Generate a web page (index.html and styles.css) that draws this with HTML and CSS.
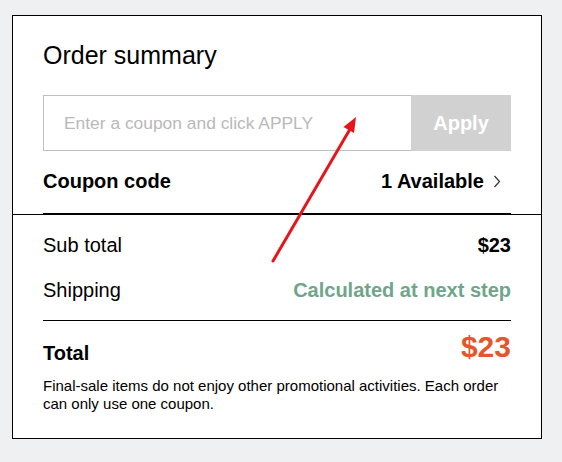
FILE: index.html
```html
<!DOCTYPE html>
<html lang="en">
<head>
<meta charset="utf-8">
<title>Order summary</title>
<link rel="stylesheet" href="styles.css">
</head>
<body>
<div class="summary">
  <h2 class="summary-title">Order summary</h2>

  <form class="coupon-form">
    <input class="coupon-input" type="text" placeholder="Enter a coupon and click APPLY">
    <button class="coupon-apply" type="button">Apply</button>
  </form>

  <div class="coupon-row">
    <span class="coupon-label">Coupon code</span>
    <span class="coupon-count">1 Available
      <svg class="chevron" width="8" height="13" viewBox="0 0 8 13"><polyline points="1.5,1 6.5,6.5 1.5,12" fill="none" stroke="#333" stroke-width="1.2"/></svg>
    </span>
  </div>

  <div class="totals">
    <div class="line">
      <span>Sub total</span>
      <span class="price">$23</span>
    </div>
    <div class="line line-last">
      <span>Shipping</span>
      <span class="shipping-note">Calculated at next step</span>
    </div>

    <div class="grand">
      <span class="grand-label">Total</span>
      <span class="grand-price">$23</span>
    </div>
    <p class="notice">Final-sale items do not enjoy other promotional activities. Each order can only use one coupon.</p>
  </div>
</div>

<!-- pointer drawn on top of the page -->
<svg class="pointer" width="562" height="462" viewBox="0 0 562 462">
  <line x1="273" y1="261" x2="349.5" y2="130" stroke="#e8141b" stroke-width="3" stroke-linecap="round"/>
  <polygon points="356,117 354,133 343.5,127" fill="#e8141b"/>
</svg>
</body>
</html>
```

FILE: styles.css
```css
body{margin:0; background:#eff0f2; font-family:"Liberation Sans", Arial, sans-serif; color:#000;}

.summary{width:468px; margin:15px 0 0 12px; padding:25px 30px 25px; background:#fff; border:1px solid #000;}
.summary-title{margin:0 0 26px; font-size:25px; line-height:28px; font-weight:normal;}

.coupon-form{display:flex; height:56px; margin:0;}
.coupon-input{flex:1; min-width:0; margin:0; padding:0 0 0 20px; border:1px solid #bfbfbf; border-right:0; font-family:inherit; font-size:17.4px; color:#333; outline:none;}
.coupon-input::placeholder{color:#b9b9b9;}
.coupon-apply{width:100px; margin:0; border:0; background:#d1d1d1; color:#fff; font-family:inherit; font-size:20px; font-weight:bold; cursor:pointer;}

.coupon-row{display:flex; justify-content:space-between; align-items:center; padding:18px 0 20px; border-bottom:1px solid #000; font-size:20px; line-height:24px; font-weight:bold;}
.coupon-count{display:flex; align-items:center;}
.chevron{margin-left:9px; margin-right:10px;}

.totals{margin:0 -30px; padding:18px 30px 0; border-top:1px solid #000;}
.line{display:flex; justify-content:space-between; font-size:20px; line-height:24px; margin-bottom:21px;}
.line-last{margin-bottom:18px;}
.price{font-weight:bold;}
.shipping-note{font-weight:bold; color:#6fa68b;}

.grand{display:flex; justify-content:space-between; align-items:flex-start; padding-top:10px; border-top:1px solid #000;}
.grand-label{margin-top:10px; font-size:20px; line-height:24px; font-weight:bold;}
.grand-price{font-size:30px; line-height:32px; font-weight:bold; color:#e4572e;}

.notice{margin:12px 0 0; font-size:15px; line-height:18px;}

.pointer{position:absolute; left:0; top:0; pointer-events:none;}
```
